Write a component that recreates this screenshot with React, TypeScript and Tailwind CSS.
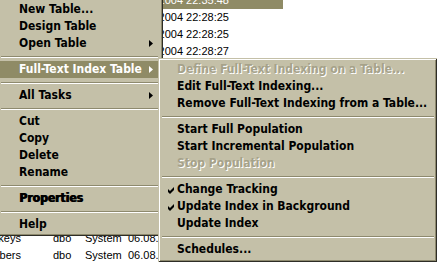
type Entry =
  | { sep: true }
  | {
      sep?: false
      label: string
      arrow?: boolean
      active?: boolean
      disabled?: boolean
      checked?: boolean
      heavy?: boolean
    }

const mainItems: Entry[] = [
  { label: "New Table..." },
  { label: "Design Table" },
  { label: "Open Table", arrow: true },
  { sep: true },
  { label: "Full-Text Index Table", arrow: true, active: true },
  { sep: true },
  { label: "All Tasks", arrow: true },
  { sep: true },
  { label: "Cut" },
  { label: "Copy" },
  { label: "Delete" },
  { label: "Rename" },
  { sep: true },
  { label: "Properties", heavy: true },
  { sep: true },
  { label: "Help" },
]

const subItems: Entry[] = [
  { label: "Define Full-Text Indexing on a Table...", disabled: true },
  { label: "Edit Full-Text Indexing..." },
  { label: "Remove Full-Text Indexing from a Table..." },
  { sep: true },
  { label: "Start Full Population" },
  { label: "Start Incremental Population" },
  { label: "Stop Population", disabled: true },
  { sep: true },
  { label: "Change Tracking", checked: true },
  { label: "Update Index in Background", checked: true },
  { label: "Update Index" },
  { sep: true },
  { label: "Schedules..." },
]

const rows = [
  { name: "sysfiles", date: "06.08.2004 22:35:48", selected: true },
  { name: "sysobjects", date: "06.08.2004 22:28:25" },
  { name: "sysindexes", date: "06.08.2004 22:28:25" },
  { name: "syscolumns", date: "06.08.2004 22:28:27" },
  { name: "systypes", date: "06.08.2004 22:28:27" },
  { name: "syscomments", date: "06.08.2004 22:28:27" },
  { name: "sysfiles1", date: "06.08.2004 22:28:27" },
  { name: "syspermissions", date: "06.08.2004 22:28:27" },
  { name: "sysusers", date: "06.08.2004 22:28:27" },
  { name: "sysproperties", date: "06.08.2004 22:28:27" },
  { name: "sysdepends", date: "06.08.2004 22:28:27" },
  { name: "sysreferences", date: "06.08.2004 22:28:27" },
  { name: "sysfulltextcatalogs", date: "06.08.2004 22:28:27" },
  { name: "sysindexkeys", date: "06.08.2004 22:28:27" },
  { name: "sysforeignkeys", date: "06.08.2004 22:28:27" },
  { name: "sysmembers", date: "06.08.2004 22:28:27" },
  { name: "sysprotects", date: "06.08.2004 22:28:27" },
]

function Arrow({ white }: { white?: boolean }) {
  return (
    <svg width="4" height="7" viewBox="0 0 4 7" className="absolute right-[5px] top-[5px]">
      <path d="M0 0 L4 3.5 L0 7 Z" fill={white ? "#ffffff" : "#000000"} />
    </svg>
  )
}

function Check() {
  return (
    <svg width="7" height="7" viewBox="0 0 7 7" className="absolute left-[7px] top-[6px]">
      <path d="M0 2 L2 4 L6 0 L6 3 L2 7 L0 5 Z" fill="#000000" />
    </svg>
  )
}

function MenuList({ items, indent }: { items: Entry[]; indent: string }) {
  return (
    <>
      {items.map((it, i) => {
        if (it.sep) {
          return (
            <div key={i} className="h-[9px] pt-[4px] pl-[1px]">
              <div className="h-[1px] bg-[#8e8a6e]" />
              <div className="h-[1px] bg-white" />
            </div>
          )
        }
        let tone = "text-black"
        if (it.active) tone = "bg-[#8f8b66] text-white"
        if (it.disabled) tone = "text-[#a6a28a] [text-shadow:1px_1px_0_#ffffff]"
        return (
          <div key={i} className={`relative h-[17px] leading-[17px] ${indent} ${tone}`}>
            {it.checked && <Check />}
            <span className={it.heavy ? "[text-shadow:1px_0_0_#000000]" : ""}>{it.label}</span>
            {it.arrow && <Arrow white={it.active} />}
          </div>
        )
      })}
    </>
  )
}

const frame =
  "shadow-[inset_1px_1px_0_#c4c0a8,inset_-1px_-1px_0_#2e2d26,inset_2px_2px_0_#ffffff,inset_-2px_-2px_0_#8e8a6e]"

export default function App() {
  return (
    <div className="relative w-[440px] h-[263px] overflow-hidden bg-white font-['Liberation_Sans',Arial,sans-serif] text-[11px] text-black">
      {/* list view behind the menus */}
      <div className="-mt-[8px]">
        {rows.map((r, i) => (
          <div
            key={i}
            className={`flex w-[283px] h-[17px] items-center whitespace-nowrap ${r.selected ? "bg-[#8f8b66] text-white" : ""}`}
          >
            <div className="w-[53px] pr-[32px] overflow-hidden flex justify-end">
              <span className="shrink-0">{r.name}</span>
            </div>
            <div className="w-[32px]">dbo</div>
            <div className="w-[43px]">System</div>
            <div className="w-[155px]">{r.date}</div>
          </div>
        ))}
      </div>

      {/* context menu */}
      <div
        className={`absolute left-[-3px] top-[-2px] w-[166px] p-[3px] bg-[#c4c0a8] ${frame} font-['DejaVu_Sans_Condensed','DejaVu_Sans',sans-serif] font-bold text-[12px] whitespace-nowrap`}
      >
        <div className="pr-[2px]">
          <MenuList items={mainItems} indent="pl-[19px]" />
        </div>
      </div>

      {/* submenu */}
      <div
        className={`absolute left-[158px] top-[58px] w-[279px] p-[3px] pb-[4px] bg-[#c4c0a8] ${frame} font-['DejaVu_Sans_Condensed','DejaVu_Sans',sans-serif] font-bold text-[12px] whitespace-nowrap`}
      >
        <MenuList items={subItems} indent="pl-[16px]" />
      </div>
    </div>
  )
}
